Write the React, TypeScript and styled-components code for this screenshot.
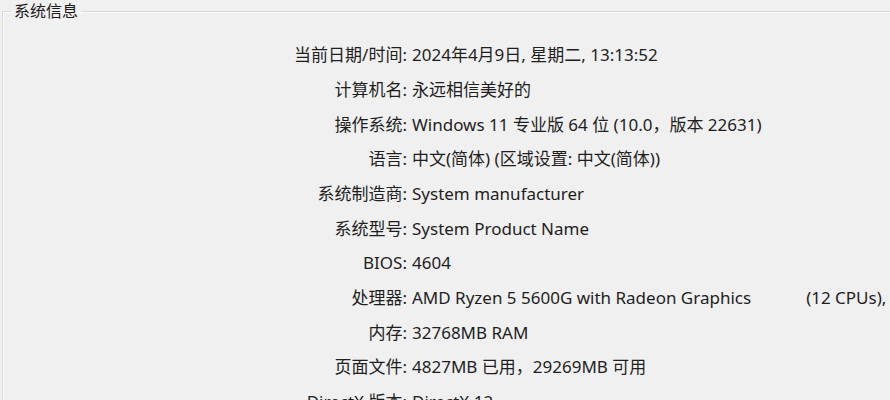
import React from "react";
import styled, { createGlobalStyle } from "styled-components";

const Global = createGlobalStyle`
  html, body {
    margin: 0;
    padding: 0;
    background: #f0f0f0;
    overflow: hidden;
  }
  body {
    width: 890px;
    height: 400px;
    font-family: "Noto Sans", "Noto Sans CJK SC", sans-serif;
    color: #1e1e1e;
  }
`;

const GroupBox = styled.fieldset`
  margin: 0 0 0 2px;
  padding: 0;
  min-width: 0;
  width: 1000px;
  border: 1px solid #d9d9d9;
  border-right: none;
  border-bottom: none;
  box-shadow: inset 1px 1px 0 #fbfbfb;
`;

const Legend = styled.legend`
  margin-left: 8px;
  padding: 0 3px;
  font-size: 16px;
  line-height: 22px;
  color: #1a1a1a;
`;

const InfoGrid = styled.div`
  display: grid;
  grid-template-columns: 404px max-content;
  grid-auto-rows: 34.67px;
  column-gap: 5px;
  align-items: center;
  padding-top: 16px;
  font-size: 17px;
  line-height: 22px;
`;

const Label = styled.div`
  text-align: right;
  white-space: nowrap;
`;

const Value = styled.div`
  white-space: nowrap;
`;

const Extra = styled.span<{ $gap: number }>`
  margin-left: ${(p) => p.$gap}px;
`;

const rows: { label: string; value: React.ReactNode }[] = [
  { label: "当前日期/时间:", value: "2024年4月9日, 星期二, 13:13:52" },
  { label: "计算机名:", value: "永远相信美好的" },
  { label: "操作系统:", value: "Windows 11 专业版 64 位 (10.0，版本 22631)" },
  { label: "语言:", value: "中文(简体) (区域设置: 中文(简体))" },
  { label: "系统制造商:", value: "System manufacturer" },
  { label: "系统型号:", value: "System Product Name" },
  { label: "BIOS:", value: "4604" },
  {
    label: "处理器:",
    value: (
      <>
        AMD Ryzen 5 5600G with Radeon Graphics
        <Extra $gap={55}>(12 CPUs),</Extra>
      </>
    ),
  },
  { label: "内存:", value: "32768MB RAM" },
  { label: "页面文件:", value: "4827MB 已用，29269MB 可用" },
  { label: "DirectX 版本:", value: "DirectX 12" },
];

export default function App() {
  return (
    <>
      <Global />
      <GroupBox>
        <Legend>系统信息</Legend>
        <InfoGrid>
          {rows.map((r) => (
            <React.Fragment key={r.label}>
              <Label>{r.label}</Label>
              <Value>{r.value}</Value>
            </React.Fragment>
          ))}
        </InfoGrid>
      </GroupBox>
    </>
  );
}
